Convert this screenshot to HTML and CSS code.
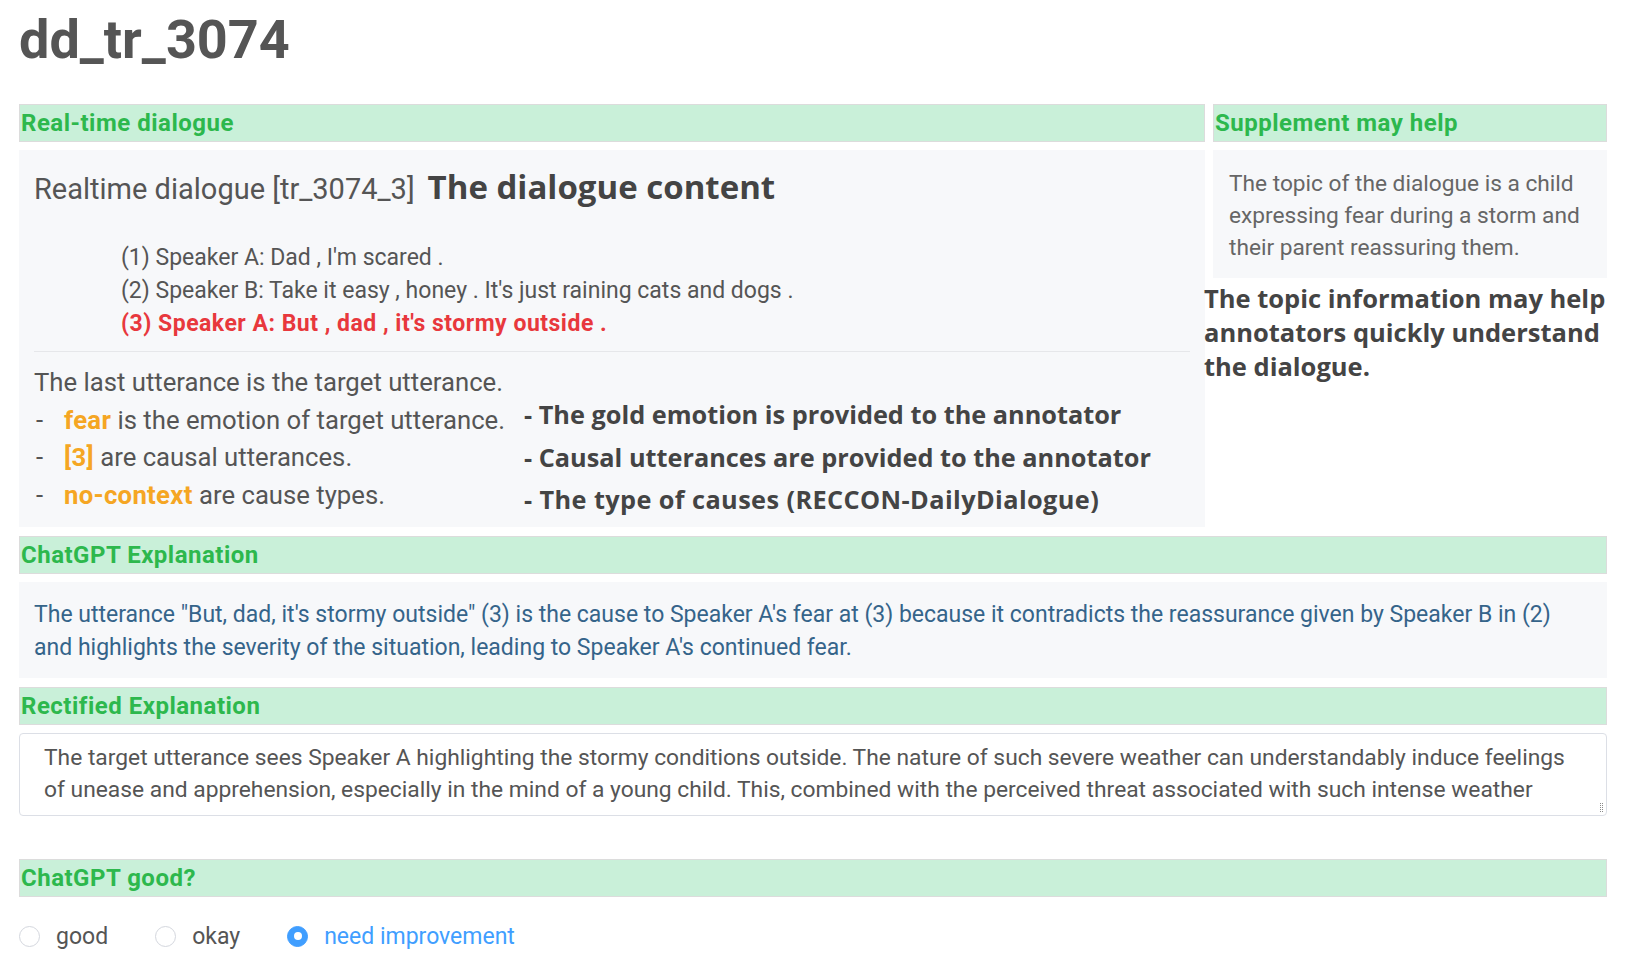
FILE: index.html
```html
<!DOCTYPE html>
<html lang="en">
<head>
<meta charset="utf-8">
<title>dd_tr_3074</title>
<link rel="stylesheet" href="styles.css">
</head>
<body>
<div class="page">
  <h1 class="title">dd_tr_3074</h1>

  <div class="top">
    <section class="col">
      <div class="bar">Real-time dialogue</div>
      <div class="panel dialogue">
        <div class="dlg-head"><span class="dlg-id">Realtime dialogue [tr_3074_3]</span><span class="note note-inline">The dialogue content</span></div>
        <ol class="utts">
          <li>(1) Speaker A: Dad , I'm scared .</li>
          <li>(2) Speaker B: Take it easy , honey . It's just raining cats and dogs .</li>
          <li class="target">(3) Speaker A: But , dad , it's stormy outside .</li>
        </ol>
        <div class="info">
          <div class="facts">
            <p>The last utterance is the target utterance.</p>
            <p><span class="dash">-</span><span class="hl">fear</span> is the emotion of target utterance.</p>
            <p><span class="dash">-</span><span class="hl">[3]</span> are causal utterances.</p>
            <p><span class="dash">-</span><span class="hl">no-context</span> are cause types.</p>
          </div>
          <div class="notes">
            <p class="note">- The gold emotion is provided to the annotator</p>
            <p class="note">- Causal utterances are provided to the annotator</p>
            <p class="note">- The type of causes (RECCON-DailyDialogue)</p>
          </div>
        </div>
      </div>
    </section>
    <section class="col side">
      <div class="bar">Supplement may help</div>
      <div class="panel topic">The topic of the dialogue is a child expressing fear during a storm and their parent reassuring them.</div>
      <p class="note topic-note">The topic information may help annotators quickly understand the dialogue.</p>
    </section>
  </div>

  <section class="block">
    <div class="bar">ChatGPT Explanation</div>
    <div class="panel expl">The utterance "But, dad, it's stormy outside" (3) is the cause to Speaker A's fear at (3) because it contradicts the reassurance given by Speaker B in (2) and highlights the severity of the situation, leading to Speaker A's continued fear.</div>
  </section>

  <section class="block">
    <div class="bar">Rectified Explanation</div>
    <div class="rect">
      <div class="rect-text">The target utterance sees Speaker A highlighting the stormy conditions outside. The nature of such severe weather can understandably induce feelings of unease and apprehension, especially in the mind of a young child. This, combined with the perceived threat associated with such intense weather</div>
      <span class="grip"></span>
    </div>
  </section>

  <section class="block good-block">
    <div class="bar">ChatGPT good?</div>
    <div class="radios">
      <label class="radio"><span class="dot"></span><span class="rlabel">good</span></label>
      <label class="radio"><span class="dot"></span><span class="rlabel">okay</span></label>
      <label class="radio on"><span class="dot"></span><span class="rlabel">need improvement</span></label>
    </div>
  </section>
</div>
</body>
</html>
```

FILE: styles.css
```css
* { box-sizing: border-box; }

html, body {
  margin: 0;
  padding: 0;
  background: #ffffff;
}

body {
  font-family: Roboto, "Liberation Sans", Arial, sans-serif;
  color: #555555;
}

.page {
  width: 1627px;
  padding: 0 20px 0 19px;
}

.title {
  margin: 0;
  padding-top: 11px;
  height: 104px;
  font-size: 54px;
  line-height: 58px;
  font-weight: 700;
  color: #555555;
}

.bar {
  height: 38px;
  background: #c9f0d9;
  border: 1px solid #dcdcdc;
  color: #2db84d;
  font-weight: 700;
  font-size: 24px;
  line-height: 36px;
  padding-left: 1px;
  letter-spacing: 0.5px;
}

.panel {
  background: #f7f8fa;
  margin-top: 8px;
}

.top {
  display: grid;
  grid-template-columns: 1186px 394px;
  column-gap: 8px;
}

.col { position: relative; }

.dialogue {
  height: 377px;
  padding: 14px 15px 0 15px;
}

.dlg-head {
  display: flex;
  align-items: baseline;
  height: 46px;
}

.dlg-id {
  font-size: 29px;
  color: #555555;
}

.note {
  font-family: "Open Sans", Lato, sans-serif;
  font-weight: 700;
  color: #444444;
  margin: 0;
}

.note-inline {
  font-size: 33px;
  margin-left: 13px;
}

.utts {
  list-style: none;
  margin: 0;
  padding: 31px 0 11px 87px;
  border-bottom: 1px solid #e6e7ea;
  font-size: 23px;
  line-height: 33px;
  color: #555555;
}

.utts .target {
  color: #e8383d;
  font-weight: 700;
  letter-spacing: 0.5px;
}

.info {
  display: flex;
  padding-top: 12px;
}

.facts {
  width: 490px;
  flex: none;
  font-size: 25.7px;
  line-height: 37.5px;
  color: #555555;
}

.facts p { margin: 0; }

.dash {
  display: inline-block;
  width: 30px;
  padding-left: 2px;
}

.hl {
  color: #f5a623;
  font-weight: 700;
  letter-spacing: 0.3px;
}

.notes {
  padding-top: 29px;
}

.notes .note {
  font-size: 25.3px;
  line-height: 42.5px;
}

.notes .note:last-child {
  letter-spacing: 0.4px;
}

.topic {
  padding: 18px 16px 14px 16px;
  font-size: 22.7px;
  line-height: 32px;
  color: #666666;
}

.topic-note {
  position: absolute;
  left: -9px;
  top: 177px;
  width: 415px;
  font-size: 25.5px;
  line-height: 34px;
}

.block { margin-top: 9px; }

.expl {
  padding: 16px 45px 14px 15px;
  font-size: 23px;
  line-height: 33px;
  color: #35648a;
}

.rect {
  position: relative;
  height: 83px;
  margin-top: 8px;
  padding: 8px 35px 0 24px;
  border: 1px solid #dcdfe6;
  border-radius: 4px;
  background: #ffffff;
}

.rect-text {
  font-size: 22.8px;
  line-height: 32px;
  color: #555555;
}

.grip {
  position: absolute;
  right: 3px;
  bottom: 3px;
  width: 3px;
  height: 9px;
  border-left: 1px dotted #8a8a8a;
  border-right: 1px dotted #8a8a8a;
}

.good-block { margin-top: 43px; }

.radios {
  display: flex;
  align-items: center;
  height: 78px;
}

.radio {
  display: flex;
  align-items: center;
  margin-right: 47px;
  font-size: 23px;
  color: #555555;
}

.dot {
  width: 21px;
  height: 21px;
  border-radius: 50%;
  border: 1px solid #d4d7de;
  background: #ffffff;
  margin-right: 16px;
  position: relative;
  flex: none;
}

.radio.on .dot {
  background: #409eff;
  border-color: #409eff;
}

.radio.on .dot::after {
  content: "";
  position: absolute;
  left: 50%;
  top: 50%;
  width: 8px;
  height: 8px;
  margin: -4px 0 0 -4px;
  border-radius: 50%;
  background: #ffffff;
}

.radio.on .rlabel { color: #409eff; }
```
